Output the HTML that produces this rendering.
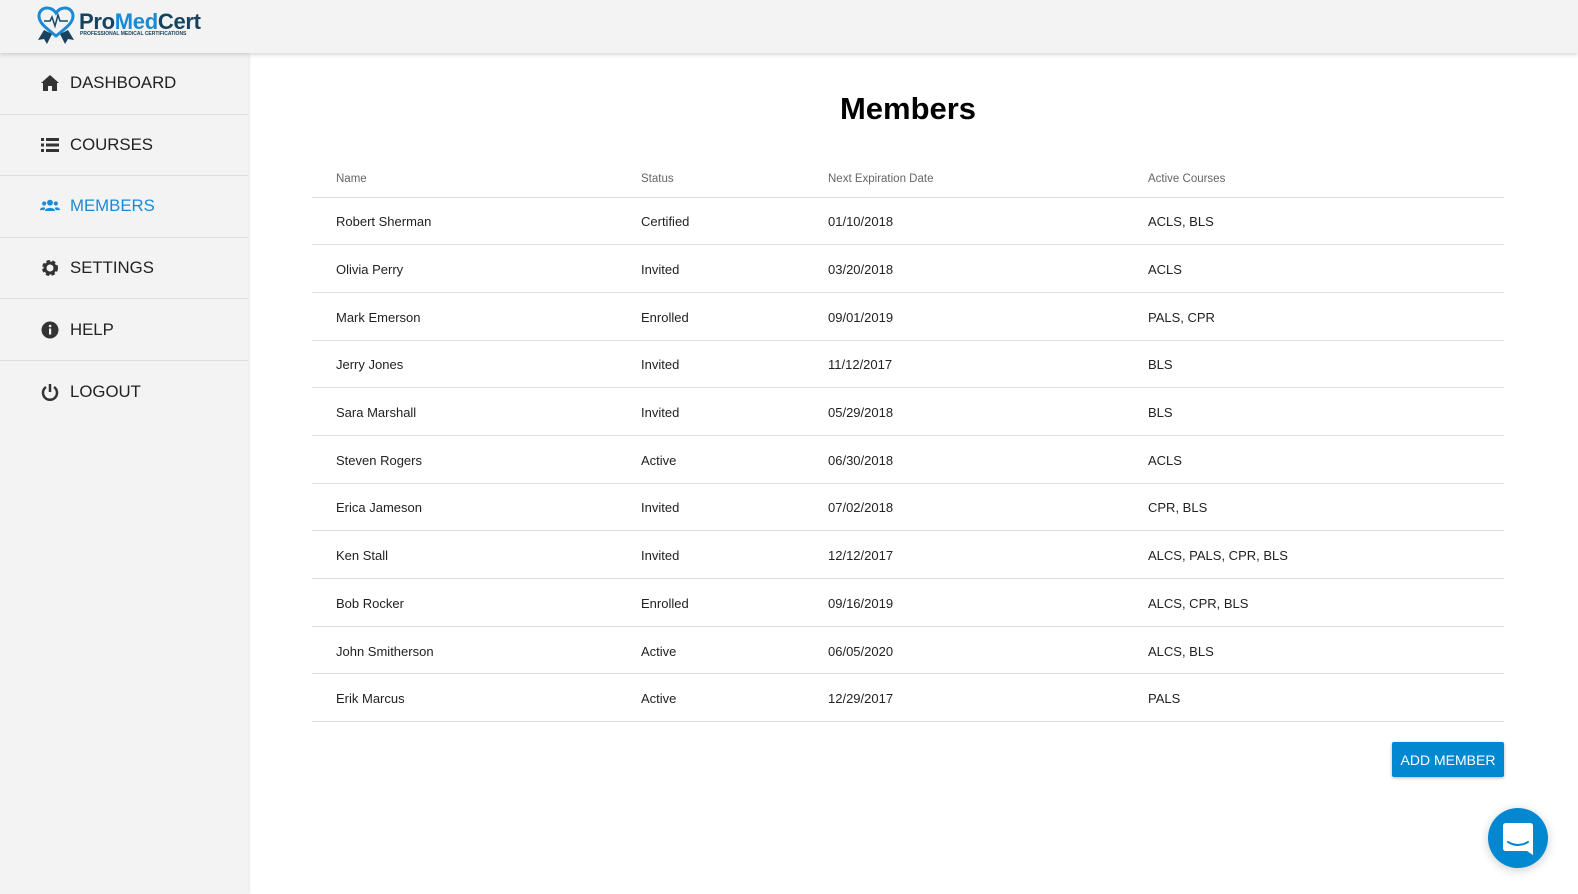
<!DOCTYPE html>
<html><head><style>
*{margin:0;padding:0;box-sizing:border-box}
body{width:1578px;height:894px;overflow:hidden;background:#fff;font-family:"Liberation Sans",sans-serif;color:#222;position:relative}
.hdr{position:absolute;left:0;top:0;width:1578px;height:53px;background:#f3f3f3;box-shadow:0 2px 4px rgba(0,0,0,.15);z-index:2}
.side{position:absolute;left:0;top:53px;width:248px;height:841px;background:#f3f3f3;box-shadow:1px 0 3px rgba(0,0,0,.12)}
.item{height:61.6px;border-bottom:1px solid #ddd;display:flex;align-items:center;padding-left:40px;font-size:16.8px;color:#222}
.item svg{width:20px;height:20px;margin-right:10px}
.item:last-child{border-bottom:none}
.item.act{color:#1a8ad6}
h1{position:absolute;left:0;width:1816px;top:91px;text-align:center;font-size:31px;font-weight:bold;color:#000}
table{position:absolute;left:312px;top:160px;width:1192px;border-collapse:collapse;font-size:13px}
th{font-weight:normal;color:#666;font-size:11.5px;text-align:left;height:37px;border-bottom:1px solid #ddd;padding-top:2px}
td{height:47.7px;border-bottom:1px solid #ddd;color:#222;padding-top:2px}
th:first-child,td:first-child{padding-left:24px}
.btn{position:absolute;left:1392px;top:742px;width:112px;height:35px;background:#0288d1;color:#fff;font-size:14px;display:flex;align-items:center;justify-content:center;border-radius:2px;box-shadow:0 1px 3px rgba(0,0,0,.3)}
.chat{position:absolute;left:1488px;top:808px;width:60px;height:60px;border-radius:50%;background:#0288d1;box-shadow:0 2px 10px rgba(0,0,0,.2)}
</style></head><body>
<div class="hdr">
<svg style="position:absolute;left:36px;top:6px" width="40" height="38" viewBox="0 0 40 38"><path d="M20 30 C10 22 3 17 3 10 C3 5 7 2 11 2 C15 2 18 4 20 7 C22 4 25 2 29 2 C33 2 37 5 37 10 C37 17 30 22 20 30Z" fill="none" stroke="#1a8ad6" stroke-width="3"/><path d="M8 15 L14 15 L16 11 L19 20 L22 9 L24 15 L32 15" fill="none" stroke="#1a4a6a" stroke-width="1.5"/><path d="M8 24 L2 34 L8 33 L11 38 L16 28Z M32 24 L38 34 L32 33 L29 38 L24 28Z" fill="#17435f"/></svg>
<div style="position:absolute;left:79px;top:9px;font-size:22px;font-weight:bold;color:#17435f;letter-spacing:-.3px">Pro<span style="color:#1a8ad6">Med</span>Cert</div>
<div style="position:absolute;left:80px;top:31px;font-size:5px;font-weight:bold;color:#17435f">PROFESSIONAL MEDICAL CERTIFICATIONS</div>
</div>
<div class="side">
<div class="item"><svg viewBox="0 0 20 20"><path d="M10 2 L1 10 L3 10 L3 18 L8 18 L8 13 L12 13 L12 18 L17 18 L17 10 L19 10Z" fill="#333"/></svg>DASHBOARD</div>
<div class="item"><svg viewBox="0 0 20 20" fill="#333"><rect x="1" y="3" width="3" height="3"/><rect x="6" y="3" width="13" height="3"/><rect x="1" y="8.5" width="3" height="3"/><rect x="6" y="8.5" width="13" height="3"/><rect x="1" y="14" width="3" height="3"/><rect x="6" y="14" width="13" height="3"/></svg>COURSES</div>
<div class="item act"><svg viewBox="0 0 24 20" fill="#1a8ad6"><circle cx="12" cy="6" r="3.5"/><circle cx="5" cy="7" r="2.5"/><circle cx="19" cy="7" r="2.5"/><path d="M6 16 C6 11 18 11 18 16Z M0 15 C0 11 7 11 6 13 L5 15Z M24 15 C24 11 17 11 18 13 L19 15Z"/></svg>MEMBERS</div>
<div class="item"><svg viewBox="0 0 20 20"><circle cx="10" cy="10" r="6" fill="none" stroke="#333" stroke-width="4" stroke-dasharray="3 2"/><circle cx="10" cy="10" r="5" fill="none" stroke="#333" stroke-width="3"/></svg>SETTINGS</div>
<div class="item"><svg viewBox="0 0 20 20"><circle cx="10" cy="10" r="8.5" fill="#333"/><rect x="9" y="8.5" width="2.2" height="6" fill="#f3f3f3"/><circle cx="10.1" cy="6" r="1.3" fill="#f3f3f3"/></svg>HELP</div>
<div class="item"><svg viewBox="0 0 20 20"><path d="M6 5 A7 7 0 1 0 14 5" fill="none" stroke="#333" stroke-width="2.5"/><line x1="10" y1="2" x2="10" y2="10" stroke="#333" stroke-width="2.5"/></svg>LOGOUT</div>
</div>
<h1>Members</h1>
<table>
<tr><th style="width:329px">Name</th><th style="width:187px">Status</th><th style="width:320px">Next Expiration Date</th><th>Active Courses</th></tr>
<tr><td>Robert Sherman</td><td>Certified</td><td>01/10/2018</td><td>ACLS, BLS</td></tr>
<tr><td>Olivia Perry</td><td>Invited</td><td>03/20/2018</td><td>ACLS</td></tr>
<tr><td>Mark Emerson</td><td>Enrolled</td><td>09/01/2019</td><td>PALS, CPR</td></tr>
<tr><td>Jerry Jones</td><td>Invited</td><td>11/12/2017</td><td>BLS</td></tr>
<tr><td>Sara Marshall</td><td>Invited</td><td>05/29/2018</td><td>BLS</td></tr>
<tr><td>Steven Rogers</td><td>Active</td><td>06/30/2018</td><td>ACLS</td></tr>
<tr><td>Erica Jameson</td><td>Invited</td><td>07/02/2018</td><td>CPR, BLS</td></tr>
<tr><td>Ken Stall</td><td>Invited</td><td>12/12/2017</td><td>ALCS, PALS, CPR, BLS</td></tr>
<tr><td>Bob Rocker</td><td>Enrolled</td><td>09/16/2019</td><td>ALCS, CPR, BLS</td></tr>
<tr><td>John Smitherson</td><td>Active</td><td>06/05/2020</td><td>ALCS, BLS</td></tr>
<tr><td>Erik Marcus</td><td>Active</td><td>12/29/2017</td><td>PALS</td></tr>
</table>
<div class="btn">ADD MEMBER</div>
<div class="chat"><svg style="position:absolute;left:15px;top:15px" width="30" height="32" viewBox="0 0 30 32"><path d="M3 0 H27 Q30 0 30 3 V32 L24 28 H3 Q0 28 0 25 V3 Q0 0 3 0Z" fill="#fff"/><path d="M5 19 Q15 25 25 19" fill="none" stroke="#0288d1" stroke-width="2" stroke-linecap="round"/></svg></div>
</body></html>
